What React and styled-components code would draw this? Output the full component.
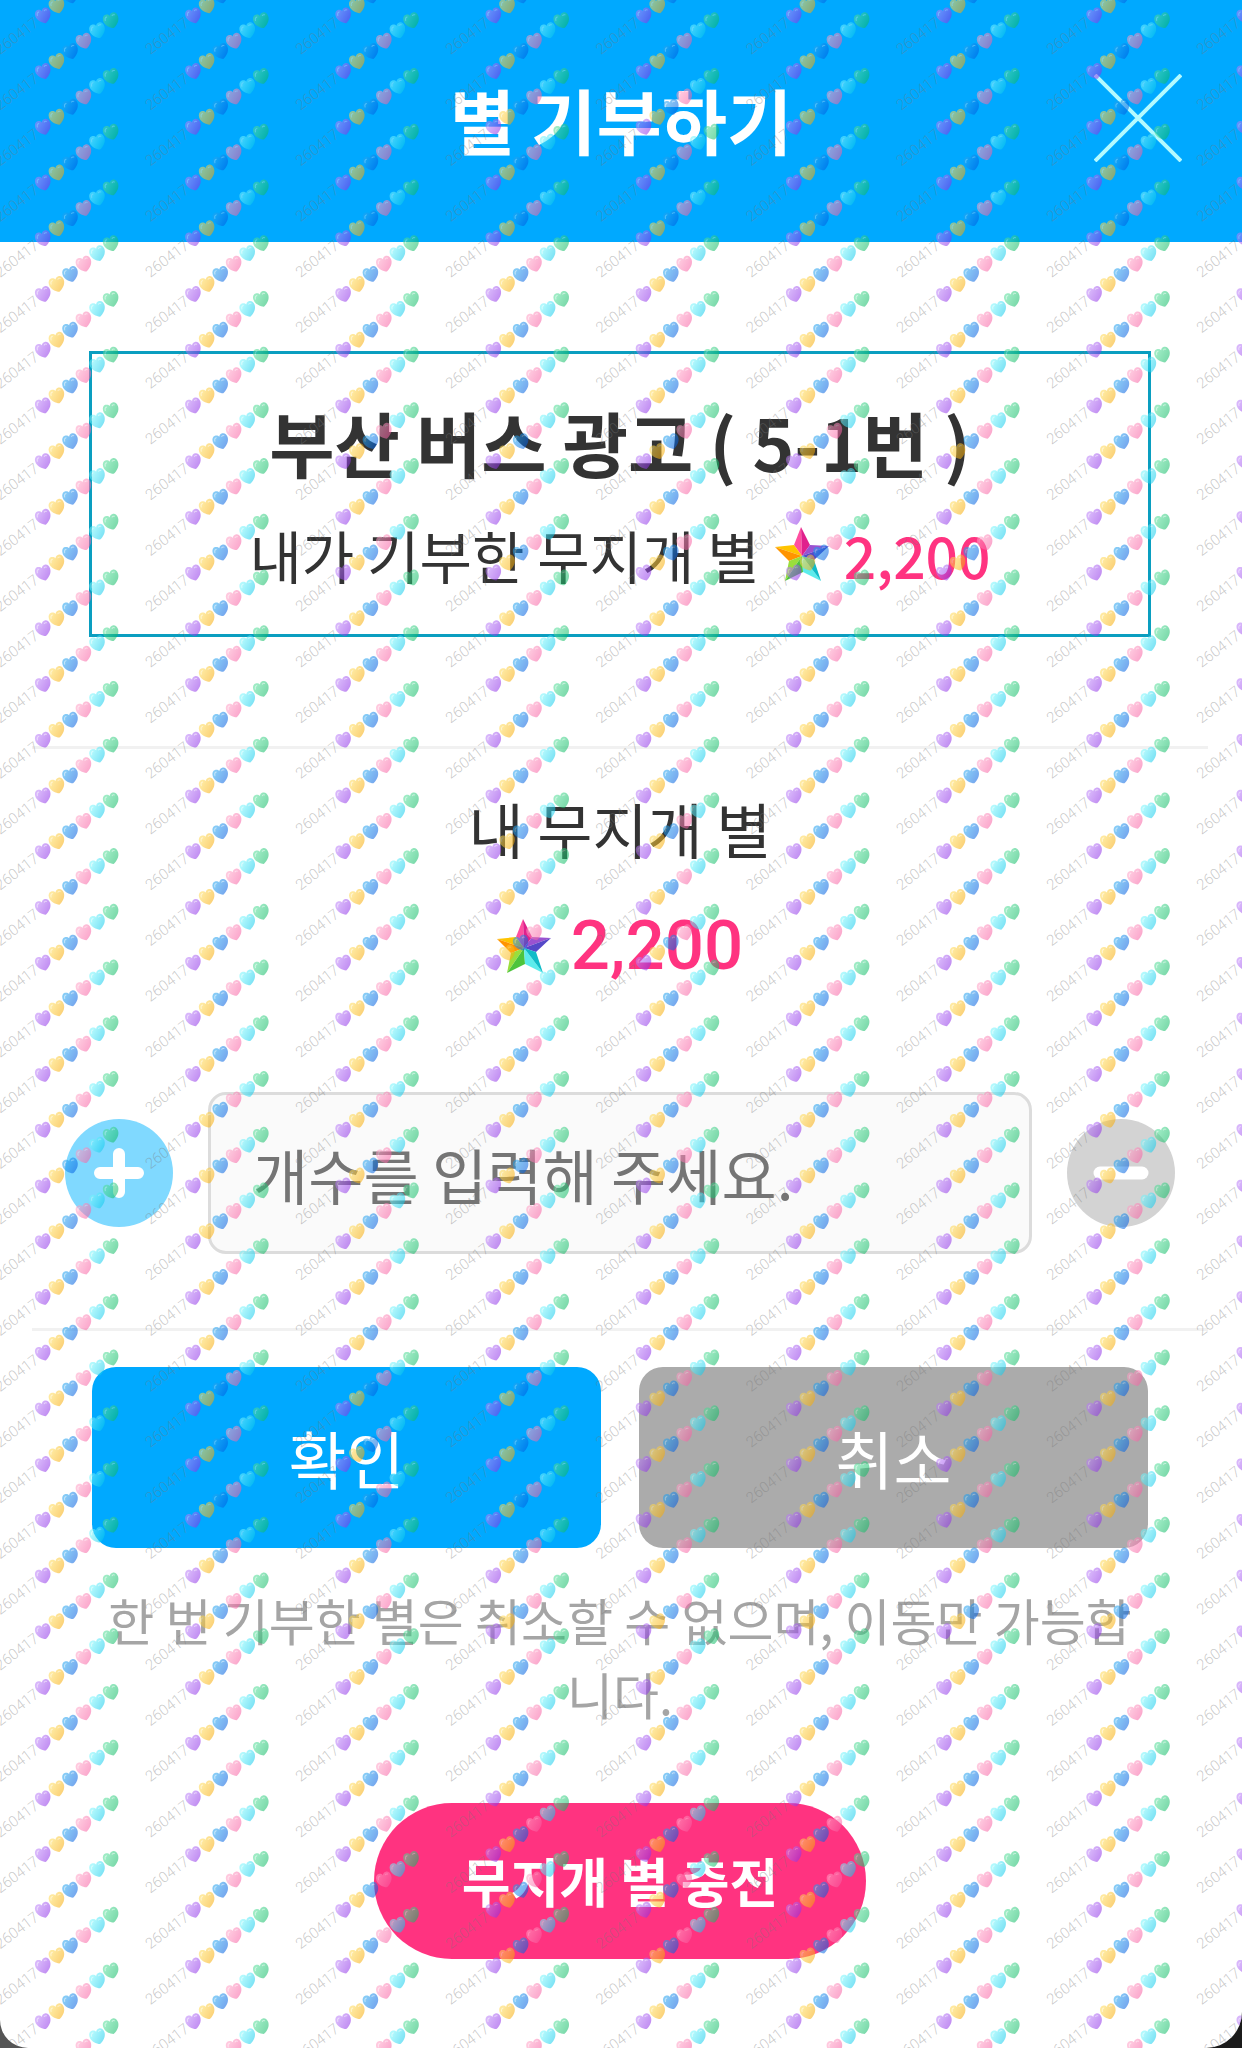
import React from 'react';
import styled, { createGlobalStyle } from 'styled-components';

const GlobalStyle = createGlobalStyle`
  * {
    box-sizing: border-box;
  }
  body {
    margin: 0;
    background: linear-gradient(to right, #555 50%, #1b1b1b 50%);
    font-family: 'Noto Sans CJK KR', 'Noto Sans', sans-serif;
    color: #333;
  }
  h1, h2, p {
    margin: 0;
  }
  button, input {
    font-family: inherit;
  }
`;

const Page = styled.div`
  position: relative;
  min-height: 100vh;
  overflow: hidden;
  background: #fff;
  border-radius: 0 0 36px 28px;
`;

const Header = styled.header`
  display: grid;
  grid-template-columns: 1fr auto 1fr;
  align-items: center;
  height: 242px;
  padding: 0 60px 6px;
  background-color: #00a9ff;
  color: white;
`;

const HeaderTitle = styled.h1`
  grid-column: 2;
  font-size: 71px;
  line-height: 100px;
  font-weight: 700;
`;

const CloseButton = styled.button`
  justify-self: end;
  display: flex;
  padding: 0;
  border: none;
  background: none;
  cursor: pointer;
`;

const Main = styled.main`
  padding: 109px 2px 88px 0;
`;

const Card = styled.section`
  margin: 0 89px 109px;
  padding: 37px 0 30px;
  border: 3px solid #0a9ec0;
  text-align: center;
`;

const CardTitle = styled.h2`
  font-size: 71px;
  line-height: 100px;
  font-weight: 700;
`;

const CardRow = styled.div`
  display: flex;
  justify-content: center;
  align-items: center;
  gap: 15px;
  padding-top: 13px;
  font-size: 57px;
  line-height: 100px;
`;

const Points = styled.strong`
  font-weight: 500;
  color: #ff3380;
`;

const BigPoints = styled(Points)`
  font-family: Roboto, sans-serif;
  font-size: 69px;
  line-height: 100px;
`;

const Divider = styled.hr`
  height: 3px;
  margin: 0 32px;
  border: none;
  background-color: #f1f1f1;
`;

const Balance = styled.section`
  display: flex;
  flex-direction: column;
  align-items: center;
  padding: 29px 0 96px;
`;

const BalanceLabel = styled.p`
  font-size: 60px;
  line-height: 100px;
`;

const BalanceRow = styled.div`
  display: flex;
  align-items: center;
  gap: 20px;
  padding-top: 18px;
`;

const AmountRow = styled.div`
  display: flex;
  align-items: center;
  gap: 35px;
  padding: 0 65px 74px;
`;

const RoundButton = styled.button`
  flex: none;
  display: flex;
  align-items: center;
  justify-content: center;
  width: 108px;
  height: 108px;
  padding: 0;
  border: none;
  border-radius: 50%;
  background-color: ${(props) => props.$color};
  cursor: pointer;
`;

const AmountInput = styled.input`
  flex: 1;
  min-width: 0;
  height: 162px;
  padding: 0 42px;
  border: 3px solid #dcdcdc;
  border-radius: 18px;
  background-color: #fafafa;
  font-size: 60px;
  color: #333;
  &::placeholder {
    color: #757575;
    opacity: 1;
  }
`;

const Actions = styled.div`
  display: grid;
  grid-template-columns: 1fr 1fr;
  gap: 38px;
  padding: 36px 92px 0;
`;

const ActionButton = styled.button`
  height: 181px;
  padding: 0 0 2px;
  border: none;
  border-radius: 24px;
  background-color: ${(props) => props.$color};
  color: white;
  font-size: 63px;
  cursor: pointer;
`;

const Notice = styled.p`
  padding: 34px 100px 0;
  text-align: center;
  font-size: 50px;
  line-height: 74px;
  color: #a5a5a5;
`;

const ChargeButton = styled.button`
  display: block;
  height: 156px;
  margin: 73px auto 0;
  padding: 0 88px 2px;
  border: none;
  border-radius: 78px;
  background-color: #ff3380;
  color: white;
  font-size: 53px;
  font-weight: 700;
  cursor: pointer;
`;

const Overlay = styled.svg`
  position: absolute;
  inset: 0;
  width: 100%;
  height: 100%;
  pointer-events: none;
`;

const HEARTS = [
  { x: 43.3, y: 71.3, color: '#8b2ae6', light: '#b87af8' },
  { x: 57, y: 61.3, color: '#f8a800', light: '#ffd850' },
  { x: 70.6, y: 51.3, color: '#0058e0', light: '#20a0f0' },
  { x: 84, y: 41, color: '#f85aa0', light: '#ff9cc4' },
  { x: 97.6, y: 30.5, color: '#08c8ec', light: '#70f4fc' },
  { x: 111.2, y: 20.5, color: '#08b860', light: '#4cdc94' },
];

// distance between two stamps
const STEP_X = 150.2;
const STEP_Y = 55.72;
const COLUMNS = Array.from({ length: 14 }, (_, i) => i);
const ROWS = Array.from({ length: 42 }, (_, i) => i - 1);

const Stamp = () => (
  <g id="stamp">
    <text
      transform="translate(0 55) rotate(-37)"
      fontFamily="Roboto, sans-serif"
      fontSize="15"
      fontWeight="300"
      fill="#777"
      fillOpacity="0.4"
    >
      260417
    </text>
    {HEARTS.map((heart, i) => (
      <g key={heart.color} transform={`translate(${heart.x} ${heart.y}) rotate(-18)`} opacity="0.54">
        <path
          d="M0 8C-3.4 6.6-7.8 3-7.8-2C-7.8-5.2-6-7.2-3.8-7.2C-2-7.2-.6-6.2 0-4.8C.6-6.2 2-7.2 3.8-7.2C6-7.2 7.8-5.2 7.8-2C7.8 3 3.4 6.6 0 8Z"
          fill={`url(#heart${i})`}
        />
        <path
          d="M-5.6-1.8C-5.6-3.8-4.6-4.8-3.2-4.8M2.4-4.4C3-4.9 4-5 4.8-4.4"
          fill="none"
          stroke="#fff"
          strokeOpacity="0.5"
          strokeLinecap="round"
        />
      </g>
    ))}
  </g>
);

const Watermark = () => (
  <Overlay aria-hidden="true">
    <defs>
      {HEARTS.map((heart, i) => (
        <linearGradient key={heart.color} id={`heart${i}`} x1="0" y1="0" x2="1" y2="1">
          <stop offset="0.2" stopColor={heart.light} />
          <stop offset="0.85" stopColor={heart.color} />
        </linearGradient>
      ))}
      <Stamp />
    </defs>
    {ROWS.map((row) =>
      COLUMNS.map((col) => (
        <use key={`${row}-${col}`} href="#stamp" x={col * STEP_X} y={row * STEP_Y} />
      ))
    )}
  </Overlay>
);

const CloseIcon = () => (
  <svg width="88" height="88" viewBox="0 0 88 88" fill="none" stroke="#b4faff" strokeWidth="4">
    <path d="M1 1L87 87M87 1L1 87" />
  </svg>
);

const StarIcon = () => (
  <svg width="54" height="54" viewBox="0 0 54 54">
    <path d="M26 0L19 18L27 29Z" fill="#ff4fa0" />
    <path d="M26 0L35 18L27 29Z" fill="#e0208c" />
    <path d="M0 20L19 18L27 29Z" fill="#ffc400" />
    <path d="M0 20L14 34L27 29Z" fill="#ff9400" />
    <path d="M54 19L35 18L27 29Z" fill="#9a52d0" />
    <path d="M54 19L39 33L27 29Z" fill="#5548c8" />
    <path d="M10 54L14 34L27 29Z" fill="#9ade3c" />
    <path d="M10 54L28 45L27 29Z" fill="#4cc43c" />
    <path d="M46 54L28 45L27 29Z" fill="#5cecec" />
    <path d="M46 54L39 33L27 29Z" fill="#10bcc8" />
  </svg>
);

const PlusIcon = () => (
  <svg width="56" height="56" viewBox="0 0 56 56" stroke="#fff" strokeWidth="12" strokeLinecap="round">
    <path d="M28 9V47M9 28H47" />
  </svg>
);

const MinusIcon = () => (
  <svg width="56" height="56" viewBox="0 0 56 56" stroke="#fff" strokeWidth="13" strokeLinecap="round">
    <path d="M7 28H49" />
  </svg>
);

const App = () => {
  return (
    <>
      <GlobalStyle />
      <Page>
        <Header>
          <HeaderTitle>별 기부하기</HeaderTitle>
          <CloseButton type="button" aria-label="닫기"><CloseIcon /></CloseButton>
        </Header>
        <Main>
          <Card>
            <CardTitle>부산 버스 광고 ( 5-1번 )</CardTitle>
            <CardRow>
              <span>내가 기부한 무지개 별</span>
              <StarIcon />
              <Points>2,200</Points>
            </CardRow>
          </Card>
          <Divider />
          <Balance>
            <BalanceLabel>내 무지개 별</BalanceLabel>
            <BalanceRow>
              <StarIcon />
              <BigPoints>2,200</BigPoints>
            </BalanceRow>
          </Balance>
          <AmountRow>
            <RoundButton type="button" $color="#80d9ff" aria-label="더하기"><PlusIcon /></RoundButton>
            <AmountInput type="text" inputMode="numeric" aria-label="개수" placeholder="개수를 입력해 주세요." />
            <RoundButton type="button" $color="#d3d3d3" aria-label="빼기"><MinusIcon /></RoundButton>
          </AmountRow>
          <Divider />
          <Actions>
            <ActionButton type="submit" $color="#00a9ff">확인</ActionButton>
            <ActionButton type="button" $color="#ababab">취소</ActionButton>
          </Actions>
          <Notice>한 번 기부한 별은 취소할 수 없으며, 이동만 가능합니다.</Notice>
          <ChargeButton type="button">무지개 별 충전</ChargeButton>
        </Main>
        <Watermark />
      </Page>
    </>
  );
};

export default App;
